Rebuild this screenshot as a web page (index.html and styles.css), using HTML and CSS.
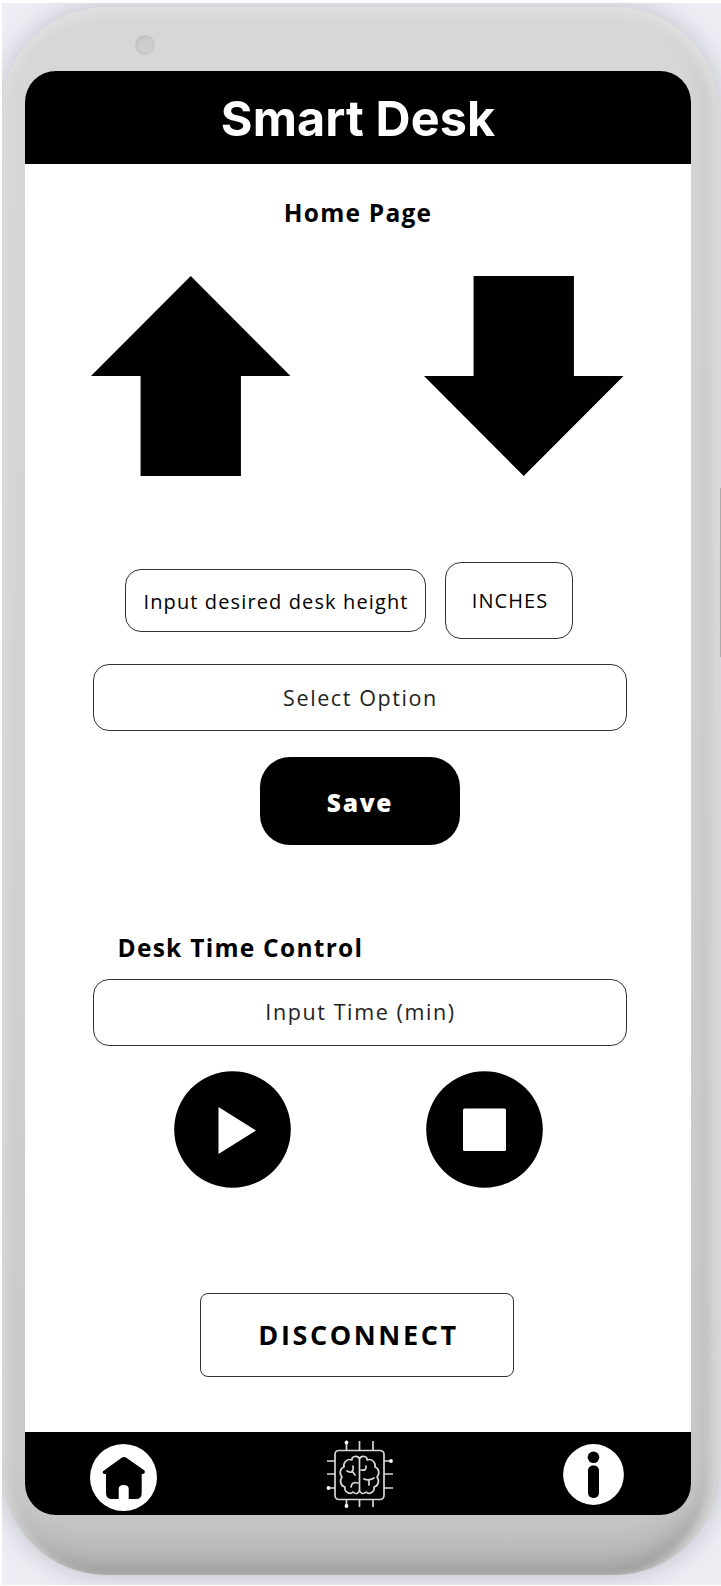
FILE: index.html
```html
<!DOCTYPE html>
<html lang="en">
<head>
<meta charset="utf-8">
<title>Smart Desk</title>
<link rel="stylesheet" href="styles.css">
</head>
<body>
<div class="stage">
  <div class="phone">
    <span class="camera"></span>
    <div class="screen">
      <header class="header"><h1 class="title">Smart Desk</h1></header>
      <main class="content">
        <h2 class="page-name">Home Page</h2>
        <div class="arrows">
          <svg class="arrow" viewBox="0 0 200 200" preserveAspectRatio="none"><path d="M100 0 200 100H150.300V200H49.700V100H0Z"/></svg>
          <svg class="arrow" viewBox="0 0 200 200" preserveAspectRatio="none"><path d="M49.700 0H150.300V100H200L100 200 0 100H49.700Z"/></svg>
        </div>
        <div class="height-row">
          <div class="field height-field"><span class="height-text">Input desired desk height</span></div>
          <div class="field unit-field"><span class="unit-text">INCHES</span></div>
        </div>
        <div class="field wide-field"><span class="select-text">Select Option</span></div>
        <button class="save"><span>Save</span></button>
        <h2 class="timer-name">Desk Time Control</h2>
        <div class="field wide-field"><span class="time-text">Input Time (min)</span></div>
        <div class="controls">
          <svg class="control" viewBox="0 0 117 117"><circle cx="58.500" cy="58.500" r="58.300"/><path class="paper" d="M44.500 36 82 59.500 44.500 83Z"/></svg>
          <svg class="control" viewBox="0 0 117 117"><circle cx="58.500" cy="58.500" r="58.300"/><rect class="paper" x="37" y="37.500" width="43" height="42.500" rx="1.500"/></svg>
        </div>
        <button class="disconnect"><span>DISCONNECT</span></button>
      </main>
      <nav class="nav">
        <svg class="home" viewBox="0 0 67 67"><circle class="paper" cx="33.500" cy="33.500" r="33.500"/><path d="M31.300 14Q34 11.800 36.700 14L54.500 26.500Q56 29.700 52 30H51.700V49Q51.700 55 46 55H38.700V45Q38.700 41 33.700 41 28.700 41 28.700 45V55H22Q16 55 16 49V30Q11.500 30 13 27.200Z"/></svg>
        <svg class="chip" viewBox="0 0 67 68">
          <rect x="9" y="10.500" width="49" height="49" rx="4"/>
          <path d="M20.500 3V10M33.500 1V10M47 1V10M20.500 60V66M33.500 60V67M47 60V67M1 21H9M1 34H9M3 48H9M58 21H65M58 34H67M58 48H67"/>
          <g class="pins"><circle cx="20.500" cy="2.500" r="1.900"/><circle cx="20.500" cy="66" r="1.900"/><circle cx="2.500" cy="48" r="1.900"/><circle cx="65" cy="21" r="1.900"/></g>
          <path class="brain" d="M33.500 19C32 15 25 16 26 20 21 18 17 23 18 27 14 28 13 34 16 37 13 41 15 46 19 47 18 52 24 55 27 52 30 55 33.500 53 33.500 50V19C35 15 42 16 41 20 46 18 50 23 49 27 53 28 54 34 51 37 54 41 52 46 48 47 49 52 43 55 40 52 37 55 33.500 53 33.500 50"/>
          <path class="brain" d="M21 31Q28 35 27 26M26 31 29 35M25 47Q26 41 32 43M35 30Q41 31 40 26M38 39Q43 41 48 38M43 40V45"/>
        </svg>
        <svg class="info" viewBox="0 0 61 61"><circle class="paper" cx="30.500" cy="30.500" r="30.400"/><circle cx="30.500" cy="13.300" r="5.800"/><rect x="25" y="21.500" width="11" height="32.500" rx="5"/></svg>
      </nav>
    </div>
  </div>
  <span class="side-button"></span>
</div>
</body>
</html>
```
FILE: styles.css
```css
* { box-sizing: border-box; }
body { margin: 0; padding: 3px 0 1px 2px; background: #fff; color: #000; font-family: "Open Sans", "Noto Sans", sans-serif; }
.stage { position: relative; width: 719px; height: 1582px; padding-top: 4px; background: #eeeff5; overflow: hidden; }
.phone {
  position: relative; width: 717px; height: 1568px; padding: 64px 0 0 23px; border-radius: 105px;
  background: linear-gradient(180deg, #d7d7d7 0%, #d3d3d3 45%, #cdcdcd 75%, #c8c8c8 95%, #b9b9b9 100%);
  box-shadow: 0 0 24px 3px rgba(80, 80, 95, .26), inset 0 14px 9px -5px #dfdfdf, inset -13px 0 9px -4px rgba(226, 226, 226, .75), inset 10px 0 8px -4px rgba(225, 225, 225, .6), inset -12px -20px 30px -12px rgba(90, 90, 90, .38);
}
.camera { position: absolute; left: 132.500px; top: 28px; width: 20px; height: 20px; border-radius: 50%; background: radial-gradient(circle at 55% 55%, #cecece 35%, #c5c5c5 60%, #b0b0b0 100%); }
.screen { width: 666px; height: 1444px; display: flex; flex-direction: column; background: #fff; border-radius: 31px; overflow: hidden; }
.header { height: 92.500px; flex: none; display: flex; justify-content: center; background: #000; }
.title { margin: 0; color: #fff; font: 700 48.500px/96px Inter, sans-serif; letter-spacing: .1px; }
.content { height: 1268px; flex: none; display: flex; flex-direction: column; align-items: center; }
.page-name, .timer-name { margin: 0; font-size: 24.500px; font-weight: 700; line-height: 34px; letter-spacing: 1.250px; }
.page-name { margin-top: 32px; }
.arrows { display: flex; gap: 134px; margin: 46px 2px 0 0; }
.arrow { width: 199.500px; height: 200px; }
.height-row { display: flex; align-items: center; gap: 19px; margin: 86px 18px 0 0; }
.field { display: flex; align-items: center; justify-content: center; border: 1.500px solid #333; border-radius: 16px; white-space: nowrap; }
.height-field { width: 301px; height: 63px; }
.unit-field { width: 128px; height: 77px; }
.wide-field { width: 534px; height: 67px; margin-left: 4px; margin-top: 25px; color: #222; }
.height-text { font-size: 20px; letter-spacing: 1.120px; padding: 2px 0 0 1px; }
.unit-text { font-size: 20px; letter-spacing: 1.050px; padding-left: 2px; }
.select-text, .time-text { font-size: 21.500px; letter-spacing: 1.600px; padding-left: 1px; }
.time-text { padding-bottom: 2px; }
.save { width: 200px; height: 88px; margin: 26px 0 0 4px; padding: 4px 0 0; border: 0; border-radius: 30px; background: #000; color: #fff; font: 800 24.500px/34px "Open Sans", sans-serif; letter-spacing: 1.700px; }
.timer-name { align-self: flex-start; margin: 86px 0 0 92.500px; letter-spacing: 1.270px; }
.timer-name + .wide-field { margin-top: 14px; }
.controls { display: flex; gap: 135px; margin: 25px 0 0 1px; }
.control { width: 117px; height: 117px; }
.paper { fill: #fff; }
.disconnect { width: 314px; height: 84px; margin: 105px 3px 0 0; padding: 0 0 0 4px; border: 1.500px solid #333; border-radius: 8px; background: #fff; color: #000; font: 700 27px/38px "Open Sans", sans-serif; letter-spacing: 2.600px; }
.nav { flex: 1; display: flex; align-items: flex-start; background: #000; padding-left: 65px; }
.home { width: 67px; height: 67px; margin-top: 12px; }
.chip { width: 67px; height: 68px; margin: 8px 0 0 169px; fill: none; stroke: #d8d8d8; stroke-width: 1.700; }
.chip .pins { fill: #fff; stroke: none; }
.brain { stroke-linecap: round; stroke-linejoin: round; }
.info { width: 61px; height: 61px; margin: 12px 0 0 170px; }
.side-button { position: absolute; left: 717.500px; top: 485px; width: 3px; height: 169px; background: #ababab; }
```
